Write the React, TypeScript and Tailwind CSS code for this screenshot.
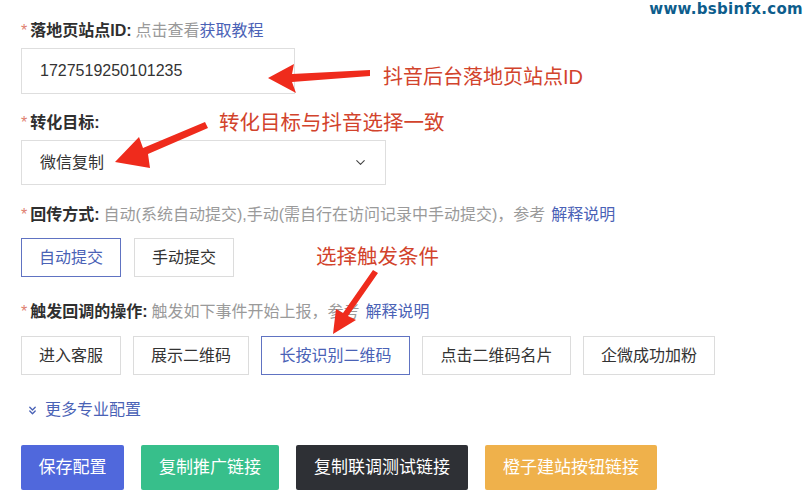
import { ChevronDown, ChevronsDown } from "lucide-react";

const font = "font-['Helvetica_Neue','Liberation_Sans','Noto_Sans_CJK_SC',sans-serif]";

function Label({
  title,
  hint,
  link,
  tight,
}: {
  title: string;
  hint?: string;
  link?: string;
  tight?: boolean;
}) {
  return (
    <div className="flex h-5 items-center text-[16px] leading-5">
      <span className="mr-[3px] text-[#e0806f]">*</span>
      <span className="font-semibold text-[#2f2f2f]">{title}</span>
      {hint && <span className="ml-1 text-[#9a9a9a]">{hint}</span>}
      {link && <span className={`${tight ? "" : "ml-[6px]"} text-[#4a62b6]`}>{link}</span>}
    </div>
  );
}

function Choice({ text, active, w }: { text: string; active?: boolean; w: string }) {
  return (
    <div
      className={`flex h-[39px] ${w} items-center justify-center border text-[16px] ${
        active ? "border-[#6073c2] text-[#4a62b6]" : "border-[#dcdcdc] text-[#333]"
      }`}
    >
      {text}
    </div>
  );
}

export default function App() {
  return (
    <div className={`relative h-[500px] w-[809px] overflow-hidden bg-white ${font}`}>
      <div className="px-[21px] pt-[21px]">
        <Label title="落地页站点ID:" hint="点击查看" link="获取教程" tight />
        <div className="mt-[7px] flex h-[46px] w-[274px] items-center border border-[#dedede] pl-[18px] text-[16px] text-[#333]">
          1727519250101235
        </div>

        <div className="mt-[19px]">
          <Label title="转化目标:" />
        </div>
        <div className="mt-[7px] flex h-[45px] w-[365px] items-center justify-between border border-[#dedede] pl-[18px] pr-[17px] text-[16px] text-[#333]">
          <span>微信复制</span>
          <ChevronDown size={15} strokeWidth={1.75} className="text-[#444]" />
        </div>

        <div className="mt-[20px]">
          <Label
            title="回传方式:"
            hint="自动(系统自动提交),手动(需自行在访问记录中手动提交)，参考"
            link="解释说明"
          />
        </div>
        <div className="mt-[13px] flex gap-[13px]">
          <Choice text="自动提交" active w="w-[100px]" />
          <Choice text="手动提交" w="w-[100px]" />
        </div>

        <div className="mt-[25px]">
          <Label title="触发回调的操作:" hint="触发如下事件开始上报，参考" link="解释说明" />
        </div>
        <div className="mt-[14px] flex gap-[12px]">
          <Choice text="进入客服" w="w-[100px]" />
          <Choice text="展示二维码" w="w-[116px]" />
          <Choice text="长按识别二维码" active w="w-[149px]" />
          <Choice text="点击二维码名片" w="w-[149px]" />
          <Choice text="企微成功加粉" w="w-[132px]" />
        </div>

        <div className="mt-[25px] flex h-5 items-center gap-[6px] pl-[5px] text-[16px] text-[#4a62b6]">
          <ChevronsDown size={13} strokeWidth={2.5} />
          <span>更多专业配置</span>
        </div>

        <div className="mt-[25px] flex gap-[17px] text-[17px] text-white">
          <div className="flex h-[45px] w-[103px] items-center justify-center rounded-[2px] bg-[#5068dc]">保存配置</div>
          <div className="flex h-[45px] w-[138px] items-center justify-center rounded-[2px] bg-[#37bf8b]">复制推广链接</div>
          <div className="flex h-[45px] w-[172px] items-center justify-center rounded-[2px] bg-[#2e3035]">复制联调测试链接</div>
          <div className="flex h-[45px] w-[172px] items-center justify-center rounded-[2px] bg-[#efb14b]">橙子建站按钮链接</div>
        </div>
      </div>

      {/* annotations */}
      <div className="absolute right-[6px] top-[-2px] text-[15px] font-bold tracking-[0.3px] text-[#0d5d8c] font-['DejaVu_Sans',sans-serif]">
        www.bsbinfx.com
      </div>
      <div className="absolute left-[383px] top-[65px] text-[20px] leading-6 text-[#d2432c]">抖音后台落地页站点ID</div>
      <div className="absolute left-[219px] top-[111px] text-[20.5px] leading-6 text-[#d2432c]">转化目标与抖音选择一致</div>
      <div className="absolute left-[316px] top-[245px] text-[20.5px] leading-6 text-[#d2432c]">选择触发条件</div>

      <svg className="pointer-events-none absolute left-0 top-0" width="809" height="500">
        <g fill="#ef2b1c">
          <polygon points="370,70 370,76 292,82 296,93 268,78 294,64 292,74" />
          <polygon points="205,122 208,128 148,154 150,168 115,162 139,137 143,148" />
          <polygon points="373,270 378,273 348,316 356,320 333,334 336,309 343,313" />
        </g>
      </svg>
    </div>
  );
}
